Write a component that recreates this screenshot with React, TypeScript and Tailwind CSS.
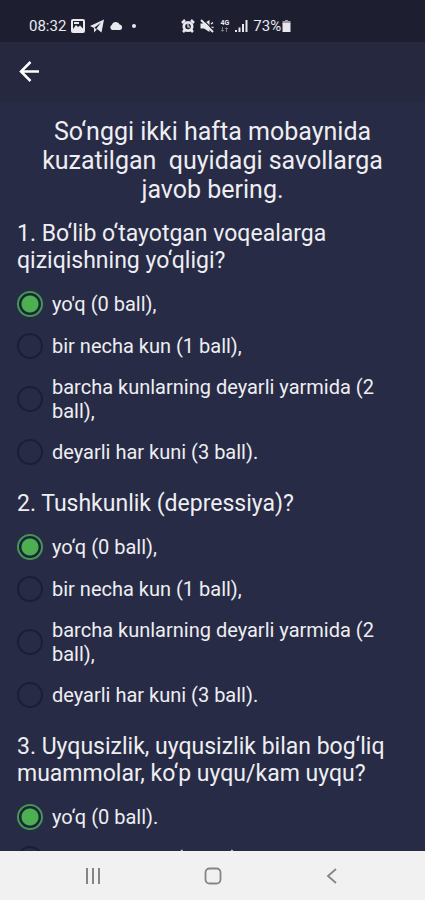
import { useState } from "react";

type Question = { text: string; options: string[] };

const questions: Question[] = [
  {
    text: "1. Bo‘lib o‘tayotgan voqealarga qiziqishning yo‘qligi?",
    options: [
      "yo'q (0 ball),",
      "bir necha kun (1 ball),",
      "barcha kunlarning deyarli yarmida (2 ball),",
      "deyarli har kuni (3 ball).",
    ],
  },
  {
    text: "2. Tushkunlik (depressiya)?",
    options: [
      "yo‘q (0 ball),",
      "bir necha kun (1 ball),",
      "barcha kunlarning deyarli yarmida (2 ball),",
      "deyarli har kuni (3 ball).",
    ],
  },
  {
    text: "3. Uyqusizlik, uyqusizlik bilan bog‘liq muammolar, ko‘p uyqu/kam uyqu?",
    options: ["yo‘q (0 ball).", "bir necha kun (1 ball),"],
  },
];

function StatusBar() {
  return (
    <div className="flex h-[42px] shrink-0 items-end bg-[#1d1e30] px-[29px] pb-[6px] text-[#e8e8ee]">
      <div className="flex h-5 items-center gap-[5px]">
        <span className="text-[15px] leading-5">08:32</span>
        <svg width="14" height="14" viewBox="0 0 14 14" aria-hidden="true">
          <rect x="1" y="1" width="12" height="12" rx="1" fill="none" stroke="currentColor" strokeWidth="2" />
          <path d="M2 10l3-4 2 2 2-1.500 3 3v2.500H2z" fill="currentColor" />
          <path d="M3 4h5" stroke="currentColor" strokeWidth="2" />
        </svg>
        <svg width="14" height="14" viewBox="0 0 14 14" fill="currentColor" aria-hidden="true">
          <path d="M14 0.500L0 7l4 2L11 3.500 6.500 9.500l5 4z" />
          <path d="M4 8.500v5l2.800-3z" />
        </svg>
        <svg width="14" height="14" viewBox="0 0 14 14" fill="currentColor" aria-hidden="true">
          <path d="M3 11a2.800 2.800 0 0 1-.3-5 4.300 4.300 0 0 1 8-.5 2.800 2.800 0 0 1 .3 5.500z" />
        </svg>
        <svg className="ml-[3px]" width="6" height="6" viewBox="0 0 6 6" fill="currentColor" aria-hidden="true">
          <circle cx="3" cy="3" r="2" />
        </svg>
      </div>
      <div className="ml-11 flex h-5 items-center gap-[5px]">
        <svg width="14" height="14" viewBox="0 0 14 14" aria-hidden="true">
          <path d="M1 4L4 1M13 4L10 1M2 13l2.500-2.500M12 13l-2.500-2.500" stroke="currentColor" strokeWidth="2.500" />
          <circle cx="7" cy="7.500" r="5.500" fill="currentColor" />
          <circle cx="7" cy="7.500" r="2.800" fill="#1d1e30" />
          <path d="M7 5v3h2" stroke="currentColor" strokeWidth="1.200" fill="none" />
        </svg>
        <svg width="14" height="14" viewBox="0 0 14 14" aria-hidden="true">
          <path d="M0.500 4.500H4L9.500 1v12L4 9.500H0.500z" fill="currentColor" />
          <path d="M11 5l2-1.500M11 8.500h2.500" stroke="currentColor" strokeWidth="1.500" />
          <path d="M2.500 0l12 12" stroke="#1d1e30" strokeWidth="1.200" />
          <path d="M1 1l12 12" stroke="currentColor" strokeWidth="2" />
        </svg>
        <span className="flex w-[11px] flex-col items-center">
          <span className="text-[7px] leading-[7px] font-bold">4G</span>
          <svg width="9" height="5" viewBox="0 0 9 5" fill="none" stroke="#777985" aria-hidden="true">
            <path d="M2.500 0v4M1 3l1.500 1.500L4 3M6.500 5V1M5 2l1.500-1.500L8 2" />
          </svg>
        </span>
        <svg width="13" height="14" viewBox="0 0 13 14" fill="currentColor" aria-hidden="true">
          <path d="M0 11h2v2H0zM3.500 8.500h2V13h-2zM7 5h2v8H7zM10.500 1h2v12h-2z" />
        </svg>
        <span className="flex items-center gap-px">
          <span className="text-[15px] leading-5">73%</span>
          <svg width="9" height="14" viewBox="0 0 9 14" aria-hidden="true">
            <path d="M3 1h3v1h2.500v2.500h-8V2H3z" fill="#9c9da8" />
            <path d="M0.500 4h8v9h-8z" fill="currentColor" />
          </svg>
        </span>
      </div>
    </div>
  );
}

function Option({ name, label, checked, onSelect }: { name: string; label: string; checked: boolean; onSelect: () => void }) {
  return (
    <label className="flex min-h-[42px] items-center gap-[9px] py-2">
      <input
        type="radio"
        name={name}
        checked={checked}
        onChange={onSelect}
        className="size-[26px] shrink-0 appearance-none rounded-full border-2 border-[#1b1e34] checked:border-[#3f9a4c] checked:bg-[radial-gradient(circle,#4caf50_8px,#1c2240_9px)]"
      />
      <span className="text-[20px] leading-6">{label}</span>
    </label>
  );
}

export default function App() {
  const [answers, setAnswers] = useState<number[]>(questions.map(() => 0));

  return (
    <div className="flex h-screen flex-col bg-[#272b45] font-['Roboto',sans-serif] text-[#eeeef2]">
      <StatusBar />
      <header className="flex h-[60px] shrink-0 items-center bg-[#25283f] px-[18px]">
        <button type="button" aria-label="Back" className="flex size-6 items-center justify-center text-white">
          <svg width="24" height="24" viewBox="0 0 24 24" fill="none" stroke="currentColor" strokeWidth="2.500" aria-hidden="true">
            <path d="M21 11.500H3.500M12.500 2L3 11.500l9.500 9.500" />
          </svg>
        </button>
      </header>
      <main className="min-h-0 flex-1 overflow-hidden px-[17px] pt-[15px]">
        <h1 className="text-center text-[25px] leading-[29px] whitespace-pre-wrap">
          {"So‘nggi ikki hafta mobaynida kuzatilgan  quyidagi savollarga javob bering."}
        </h1>
        <form className="mt-4 flex flex-col gap-[17px]">
          {questions.map((question, q) => (
            <fieldset key={question.text}>
              <legend className="pb-[9px] text-[23px] leading-[27px]">{question.text}</legend>
              {question.options.map((option, o) => (
                <Option
                  key={option}
                  name={`question-${q}`}
                  label={option}
                  checked={answers[q] === o}
                  onSelect={() => setAnswers(answers.map((a, i) => (i === q ? o : a)))}
                />
              ))}
            </fieldset>
          ))}
        </form>
      </main>
      <nav className="grid h-[49px] shrink-0 grid-cols-[1fr_52px_1fr] items-center bg-[#f1f1f1] text-[#858585]">
        <button type="button" aria-label="Recent apps" className="flex justify-center">
          <svg width="18" height="18" viewBox="0 0 18 18" fill="none" stroke="currentColor" strokeWidth="2" aria-hidden="true">
            <path d="M3 1v16M9 1v16M15 1v16" />
          </svg>
        </button>
        <button type="button" aria-label="Home" className="flex justify-center">
          <svg width="18" height="18" viewBox="0 0 18 18" fill="none" stroke="currentColor" strokeWidth="1.800" aria-hidden="true">
            <rect x="1.500" y="1.500" width="15" height="15" rx="4" />
          </svg>
        </button>
        <button type="button" aria-label="Navigate back" className="flex justify-center">
          <svg width="18" height="18" viewBox="0 0 18 18" fill="none" stroke="currentColor" strokeWidth="1.800" aria-hidden="true">
            <path d="M13 2L5 9l8 7" />
          </svg>
        </button>
      </nav>
    </div>
  );
}
